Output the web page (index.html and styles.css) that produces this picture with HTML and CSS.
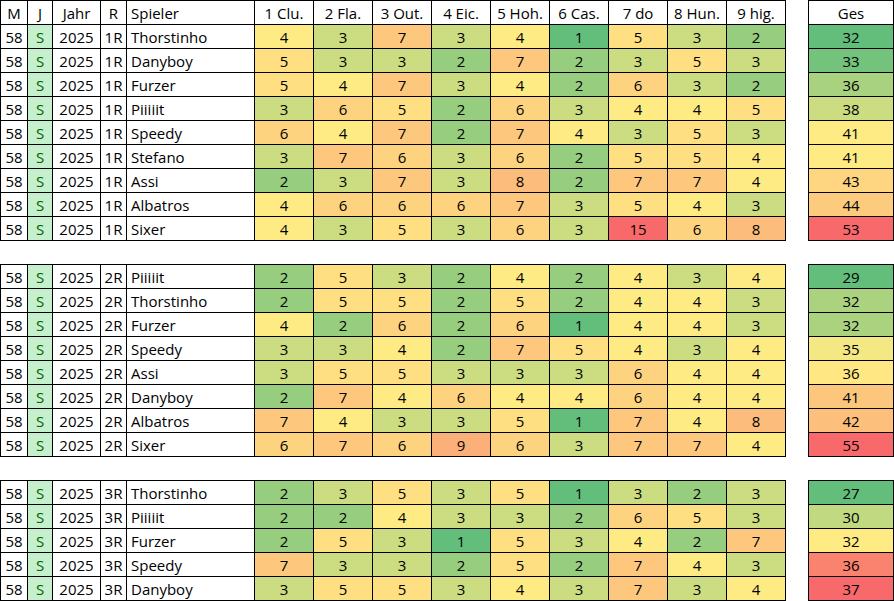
FILE: index.html
```html
<!DOCTYPE html>
<html lang="de">
<head>
<meta charset="utf-8">
<title>Runden</title>
<link rel="stylesheet" href="styles.css">
</head>
<body>
<table class="sheet">
<colgroup>
<col class="c-m"><col class="c-j"><col class="c-jahr"><col class="c-r"><col class="c-name">
<col class="c-h"><col class="c-h"><col class="c-h"><col class="c-h"><col class="c-h"><col class="c-h"><col class="c-h"><col class="c-h"><col class="c-h">
<col class="c-gap"><col class="c-ges">
</colgroup>
<thead>
<tr><th>M</th><th>J</th><th>Jahr</th><th>R</th><th class="name">Spieler</th><th>1 Clu.</th><th>2 Fla.</th><th>3 Out.</th><th>4 Eic.</th><th>5 Hoh.</th><th>6 Cas.</th><th>7 do</th><th>8 Hun.</th><th>9 hig.</th><th class="gap"></th><th>Ges</th></tr>
</thead>
<tbody>
<tr><td>58</td><td class="j">S</td><td>2025</td><td>1R</td><td class="name">Thorstinho</td><td class="h4">4</td><td class="h3">3</td><td class="h7">7</td><td class="h3">3</td><td class="h4">4</td><td class="h1">1</td><td class="h5">5</td><td class="h3">3</td><td class="h2">2</td><td class="gap"></td><td style="background:#63BE7B">32</td></tr>
<tr><td>58</td><td class="j">S</td><td>2025</td><td>1R</td><td class="name">Danyboy</td><td class="h5">5</td><td class="h3">3</td><td class="h3">3</td><td class="h2">2</td><td class="h7">7</td><td class="h2">2</td><td class="h3">3</td><td class="h5">5</td><td class="h3">3</td><td class="gap"></td><td style="background:#74C37C">33</td></tr>
<tr><td>58</td><td class="j">S</td><td>2025</td><td>1R</td><td class="name">Furzer</td><td class="h5">5</td><td class="h4">4</td><td class="h7">7</td><td class="h3">3</td><td class="h4">4</td><td class="h2">2</td><td class="h6">6</td><td class="h3">3</td><td class="h2">2</td><td class="gap"></td><td style="background:#A8D27F">36</td></tr>
<tr><td>58</td><td class="j">S</td><td>2025</td><td>1R</td><td class="name">Piiiiit</td><td class="h3">3</td><td class="h6">6</td><td class="h5">5</td><td class="h2">2</td><td class="h6">6</td><td class="h3">3</td><td class="h4">4</td><td class="h4">4</td><td class="h5">5</td><td class="gap"></td><td style="background:#CBDC81">38</td></tr>
<tr><td>58</td><td class="j">S</td><td>2025</td><td>1R</td><td class="name">Speedy</td><td class="h6">6</td><td class="h4">4</td><td class="h7">7</td><td class="h2">2</td><td class="h7">7</td><td class="h4">4</td><td class="h3">3</td><td class="h5">5</td><td class="h3">3</td><td class="gap"></td><td style="background:#FFEB84">41</td></tr>
<tr><td>58</td><td class="j">S</td><td>2025</td><td>1R</td><td class="name">Stefano</td><td class="h3">3</td><td class="h7">7</td><td class="h6">6</td><td class="h3">3</td><td class="h6">6</td><td class="h2">2</td><td class="h5">5</td><td class="h5">5</td><td class="h4">4</td><td class="gap"></td><td style="background:#FFEB84">41</td></tr>
<tr><td>58</td><td class="j">S</td><td>2025</td><td>1R</td><td class="name">Assi</td><td class="h2">2</td><td class="h3">3</td><td class="h7">7</td><td class="h3">3</td><td class="h8">8</td><td class="h2">2</td><td class="h7">7</td><td class="h7">7</td><td class="h4">4</td><td class="gap"></td><td style="background:#FED580">43</td></tr>
<tr><td>58</td><td class="j">S</td><td>2025</td><td>1R</td><td class="name">Albatros</td><td class="h4">4</td><td class="h6">6</td><td class="h6">6</td><td class="h6">6</td><td class="h7">7</td><td class="h3">3</td><td class="h5">5</td><td class="h4">4</td><td class="h3">3</td><td class="gap"></td><td style="background:#FDCB7E">44</td></tr>
<tr><td>58</td><td class="j">S</td><td>2025</td><td>1R</td><td class="name">Sixer</td><td class="h4">4</td><td class="h3">3</td><td class="h5">5</td><td class="h3">3</td><td class="h6">6</td><td class="h3">3</td><td class="h15">15</td><td class="h6">6</td><td class="h8">8</td><td class="gap"></td><td style="background:#F8696B">53</td></tr>
<tr class="blank"><td colspan="16"></td></tr>
<tr><td>58</td><td class="j">S</td><td>2025</td><td>2R</td><td class="name">Piiiiit</td><td class="h2">2</td><td class="h5">5</td><td class="h3">3</td><td class="h2">2</td><td class="h4">4</td><td class="h2">2</td><td class="h4">4</td><td class="h3">3</td><td class="h4">4</td><td class="gap"></td><td style="background:#63BE7B">29</td></tr>
<tr><td>58</td><td class="j">S</td><td>2025</td><td>2R</td><td class="name">Thorstinho</td><td class="h2">2</td><td class="h5">5</td><td class="h5">5</td><td class="h2">2</td><td class="h5">5</td><td class="h2">2</td><td class="h4">4</td><td class="h4">4</td><td class="h3">3</td><td class="gap"></td><td style="background:#ABD37F">32</td></tr>
<tr><td>58</td><td class="j">S</td><td>2025</td><td>2R</td><td class="name">Furzer</td><td class="h4">4</td><td class="h2">2</td><td class="h6">6</td><td class="h2">2</td><td class="h6">6</td><td class="h1">1</td><td class="h4">4</td><td class="h4">4</td><td class="h3">3</td><td class="gap"></td><td style="background:#ABD37F">32</td></tr>
<tr><td>58</td><td class="j">S</td><td>2025</td><td>2R</td><td class="name">Speedy</td><td class="h3">3</td><td class="h3">3</td><td class="h4">4</td><td class="h2">2</td><td class="h7">7</td><td class="h5">5</td><td class="h4">4</td><td class="h3">3</td><td class="h4">4</td><td class="gap"></td><td style="background:#F3E883">35</td></tr>
<tr><td>58</td><td class="j">S</td><td>2025</td><td>2R</td><td class="name">Assi</td><td class="h3">3</td><td class="h5">5</td><td class="h5">5</td><td class="h3">3</td><td class="h3">3</td><td class="h3">3</td><td class="h6">6</td><td class="h4">4</td><td class="h4">4</td><td class="gap"></td><td style="background:#FFE883">36</td></tr>
<tr><td>58</td><td class="j">S</td><td>2025</td><td>2R</td><td class="name">Danyboy</td><td class="h2">2</td><td class="h7">7</td><td class="h4">4</td><td class="h6">6</td><td class="h4">4</td><td class="h4">4</td><td class="h6">6</td><td class="h4">4</td><td class="h4">4</td><td class="gap"></td><td style="background:#FDC67D">41</td></tr>
<tr><td>58</td><td class="j">S</td><td>2025</td><td>2R</td><td class="name">Albatros</td><td class="h7">7</td><td class="h4">4</td><td class="h3">3</td><td class="h3">3</td><td class="h5">5</td><td class="h1">1</td><td class="h7">7</td><td class="h4">4</td><td class="h8">8</td><td class="gap"></td><td style="background:#FDC07C">42</td></tr>
<tr><td>58</td><td class="j">S</td><td>2025</td><td>2R</td><td class="name">Sixer</td><td class="h6">6</td><td class="h7">7</td><td class="h6">6</td><td class="h9">9</td><td class="h6">6</td><td class="h3">3</td><td class="h7">7</td><td class="h7">7</td><td class="h4">4</td><td class="gap"></td><td style="background:#F8696B">55</td></tr>
<tr class="blank"><td colspan="16"></td></tr>
<tr><td>58</td><td class="j">S</td><td>2025</td><td>3R</td><td class="name">Thorstinho</td><td class="h2">2</td><td class="h3">3</td><td class="h5">5</td><td class="h3">3</td><td class="h5">5</td><td class="h1">1</td><td class="h3">3</td><td class="h2">2</td><td class="h3">3</td><td class="gap"></td><td style="background:#63BE7B">27</td></tr>
<tr><td>58</td><td class="j">S</td><td>2025</td><td>3R</td><td class="name">Piiiiit</td><td class="h2">2</td><td class="h2">2</td><td class="h4">4</td><td class="h3">3</td><td class="h3">3</td><td class="h2">2</td><td class="h6">6</td><td class="h5">5</td><td class="h3">3</td><td class="gap"></td><td style="background:#C1D980">30</td></tr>
<tr><td>58</td><td class="j">S</td><td>2025</td><td>3R</td><td class="name">Furzer</td><td class="h2">2</td><td class="h5">5</td><td class="h3">3</td><td class="h1">1</td><td class="h5">5</td><td class="h3">3</td><td class="h4">4</td><td class="h2">2</td><td class="h7">7</td><td class="gap"></td><td style="background:#FFEB84">32</td></tr>
<tr><td>58</td><td class="j">S</td><td>2025</td><td>3R</td><td class="name">Speedy</td><td class="h7">7</td><td class="h3">3</td><td class="h3">3</td><td class="h2">2</td><td class="h5">5</td><td class="h2">2</td><td class="h7">7</td><td class="h4">4</td><td class="h3">3</td><td class="gap"></td><td style="background:#F9836F">36</td></tr>
<tr><td>58</td><td class="j">S</td><td>2025</td><td>3R</td><td class="name">Danyboy</td><td class="h3">3</td><td class="h5">5</td><td class="h5">5</td><td class="h3">3</td><td class="h4">4</td><td class="h3">3</td><td class="h7">7</td><td class="h3">3</td><td class="h4">4</td><td class="gap"></td><td style="background:#F8696B">37</td></tr>
</tbody>
</table>
</body>
</html>
```

FILE: styles.css
```css
html, body {
  margin: 0;
  padding: 0;
  background: #ffffff;
}

.sheet {
  border-collapse: collapse;
  table-layout: fixed;
  width: 894px;
  font-family: "Open Sans", "Liberation Sans", sans-serif;
  font-size: 15px;
  color: #000;
}

.c-m { width: 27px; }
.c-j { width: 25px; }
.c-jahr { width: 48px; }
.c-r { width: 26px; }
.c-name { width: 128px; }
.c-h { width: 59px; }
.c-gap { width: 23px; }
.c-ges { width: 85px; }

.sheet tr { height: 24px; }

.sheet th,
.sheet td {
  border: 1px solid #000;
  padding: 1px 0 0 0;
  text-align: center;
  vertical-align: middle;
  font-weight: normal;
  white-space: nowrap;
  overflow: hidden;
  line-height: 20px;
}

.sheet .name {
  text-align: left;
  padding-left: 4px;
}

.sheet .gap {
  border-top: none;
  border-bottom: none;
  background: #fff;
}

.sheet .blank td {
  border: none;
}

.sheet .j {
  background: #C6EFCE;
  color: #006100;
}

.h1 { background: #63BE7B; }
.h2 { background: #97CD7E; }
.h3 { background: #CBDC81; }
.h4 { background: #FFEB84; }
.h5 { background: #FEDF82; }
.h6 { background: #FED380; }
.h7 { background: #FDC87D; }
.h8 { background: #FCBC7B; }
.h9 { background: #FCB079; }
.h15 { background: #F8696B; }
```
